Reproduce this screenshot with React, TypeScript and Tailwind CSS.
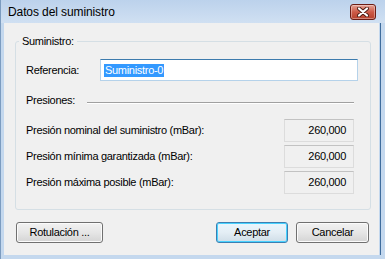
export default function App() {
  const rows = [
    "Presión nominal del suministro (mBar):",
    "Presión mínima garantizada (mBar):",
    "Presión máxima posible (mBar):",
  ];

  return (
    <div
      className="w-[385px] h-[259px] flex flex-col bg-[#c4d8ee] text-[11px] tracking-[-0.3px] text-black overflow-hidden"
      style={{ fontFamily: '"Liberation Sans", Arial, sans-serif' }}
    >
      {/* Title bar */}
      <div className="h-[23px] shrink-0 flex items-center justify-between pl-[7px] pr-[9px] bg-gradient-to-b from-[#bcd2ec] to-[#d0e0f2] border-l border-[#7c9cc0]">
        <span className="text-[12px] tracking-[-0.1px] leading-none">Datos del suministro</span>
        <button className="w-[26px] h-[16px] rounded-[3px] border border-[#6b1c14] bg-gradient-to-b from-[#e3a195] via-[#cd5a47] to-[#b6402c] flex items-center justify-center shadow-[inset_0_0_0_1px_rgba(255,255,255,0.35)]">
          <svg width="12" height="10" viewBox="0 0 12 10">
            <path
              d="M2 1.5 L10 8.5 M10 1.5 L2 8.5"
              stroke="#4a1a12"
              strokeWidth="4"
              strokeLinecap="round"
            />
            <path
              d="M2 1.5 L10 8.5 M10 1.5 L2 8.5"
              stroke="#ffffff"
              strokeWidth="2.2"
              strokeLinecap="round"
            />
          </svg>
        </button>
      </div>

      {/* Frame + client */}
      <div className="flex-1 flex pl-[3px] pr-[1px] pb-[4px] border-l border-[#7c9cc0]">
        <div className="flex-1 bg-[#f0f0f0] flex flex-col pt-[18px]">
          {/* Group box */}
          <div className="ml-[11px] w-[356px] h-[169px] border border-[#d5dfe5] rounded-[3px] flex flex-col">
            <span className="-mt-[7px] ml-[3px] px-[3px] w-fit bg-[#f0f0f0] leading-[13px]">
              Suministro:
            </span>

            <div className="mt-[11px] flex items-center pl-[10px]">
              <span className="w-[74px]">Referencia:</span>
              <div className="w-[258px] h-[22px] border border-[#b5d2ea] border-t-[#3d7bad] bg-white flex items-center pl-[3px]">
                <span className="bg-[#3399ff] text-white leading-[13px] px-px">Suministro-0</span>
              </div>
            </div>

            <div className="mt-[13px] flex items-start pl-[10px] pr-[16px]">
              <span className="w-[61px] leading-[13px]">Presiones:</span>
              <div className="flex-1 mt-[8px] border-t border-[#a0a0a0] border-b border-b-white" />
            </div>

            <div className="mt-[12px] flex flex-col gap-[3px] pl-[10px] pr-[16px]">
              {rows.map((label) => (
                <div key={label} className="flex items-center justify-between">
                  <span>{label}</span>
                  <div className="w-[70px] h-[23px] border border-[#dcdcdc] border-t-[#c2c2c2] bg-[#f0f0f0] flex items-center justify-end pr-[7px]">
                    260,000
                  </div>
                </div>
              ))}
            </div>
          </div>

          {/* Buttons */}
          <div className="mt-[12px] ml-[12px] flex gap-[8px]">
            <button className="w-[87px] h-[21px] rounded-[3px] border border-[#707070] bg-gradient-to-b from-[#f2f2f2] via-[#e6e6e6] to-[#d4d4d4] shadow-[inset_0_0_0_1px_#fbfbfb] flex items-center justify-center">
              Rotulación ...
            </button>
            <div className="flex-1" />
            <button className="w-[72px] h-[21px] rounded-[3px] border border-[#3c7fb1] bg-gradient-to-b from-[#eaf6fd] via-[#e4eef5] to-[#cfdde7] shadow-[inset_0_0_0_1px_#48d2ff] flex items-center justify-center">
              Aceptar
            </button>
            <button className="w-[73px] h-[21px] mr-[10px] rounded-[3px] border border-[#707070] bg-gradient-to-b from-[#f2f2f2] via-[#e6e6e6] to-[#d4d4d4] shadow-[inset_0_0_0_1px_#fbfbfb] flex items-center justify-center">
              Cancelar
            </button>
          </div>
        </div>
        <div className="w-[1px] bg-[#c4d8ee]" />
        <div className="w-[1px] bg-[#3f6c9c]" />
        <div className="w-[3px] bg-[#c4d8ee]" />
      </div>
    </div>
  );
}
